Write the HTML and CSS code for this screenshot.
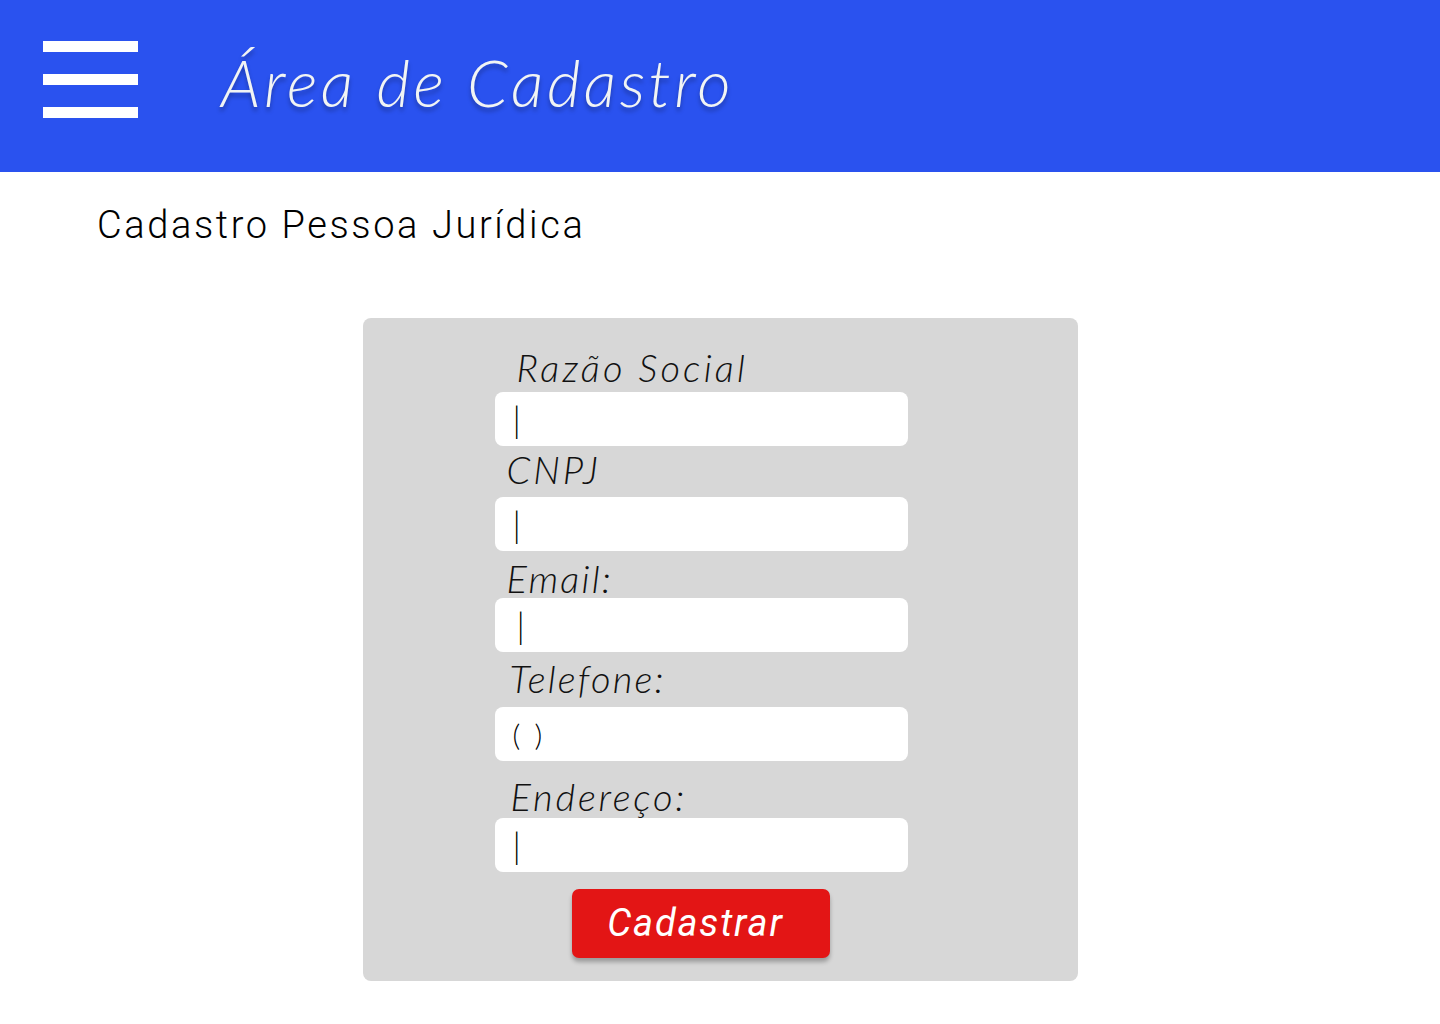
FILE: index.html
```html
<!DOCTYPE html>
<html lang="pt-BR">
<head>
<meta charset="utf-8">
<title>Área de Cadastro</title>
<link rel="stylesheet" href="styles.css">
</head>
<body>
<header class="topbar">
  <button class="menu" aria-label="Menu">
    <span class="menu-bar"></span>
    <span class="menu-bar"></span>
    <span class="menu-bar"></span>
  </button>
  <h1 class="title">Área de Cadastro</h1>
</header>
<main class="page">
  <h2 class="subtitle">Cadastro Pessoa Jurídica</h2>
  <form class="card">
    <label class="label label-razao" for="razao">Razão Social</label>
    <input class="field" id="razao" type="text" value="|">
    <label class="label label-cnpj" for="cnpj">CNPJ</label>
    <input class="field" id="cnpj" type="text" value="|">
    <label class="label label-email" for="email">Email:</label>
    <input class="field field-email" id="email" type="text" value="|">
    <label class="label label-tel" for="tel">Telefone:</label>
    <input class="field field-tel" id="tel" type="text" value="( )">
    <label class="label label-end" for="end">Endereço:</label>
    <input class="field" id="end" type="text" value="|">
    <button class="submit" type="button">Cadastrar</button>
  </form>
</main>
</body>
</html>
```
FILE: styles.css
```css
* { box-sizing: border-box; }

body {
  margin: 0;
  background: #ffffff;
  font-family: Lato, "Open Sans", sans-serif;
  color: #111;
}

.topbar {
  height: 172px;
  background: #2a52ef;
  display: flex;
  align-items: flex-start;
  padding-left: 43px;
}

.menu {
  margin-top: 41px;
  width: 95px;
  padding: 0;
  border: 0;
  background: transparent;
  display: flex;
  flex-direction: column;
  gap: 22px;
}

.menu-bar {
  display: block;
  height: 11px;
  width: 95px;
  background: #ffffff;
}

.title {
  margin: 44px 0 0 83px;
  font-family: Lato, sans-serif;
  font-style: italic;
  font-weight: 300;
  font-size: 65px;
  line-height: 76px;
  color: #f1f4f4;
  text-shadow: 0 4px 4px rgba(0, 0, 0, 0.28);
  letter-spacing: 3.4px;
}

.page {
  padding-top: 31px;
  padding-bottom: 40px;
}

.subtitle {
  margin: 0 0 0 97px;
  font-family: Roboto, sans-serif;
  font-weight: 300;
  font-size: 38px;
  line-height: 44px;
  color: #000;
  letter-spacing: 2.6px;
}

.card {
  width: 715px;
  height: 663px;
  margin: 71px auto 0;
  background: #d7d7d7;
  border-radius: 8px;
  padding: 29px 0 0 132px;
  display: flex;
  flex-direction: column;
  align-items: flex-start;
}

.label {
  display: block;
  font-family: Lato, sans-serif;
  font-style: italic;
  font-weight: 300;
  font-size: 38px;
  line-height: 40px;
  color: #111;
  letter-spacing: 2.2px;
}

.label-razao { padding-left: 22px; margin-bottom: 5px; letter-spacing: 3.2px; }
.label-cnpj  { padding-left: 12px; margin-top: 3px; margin-bottom: 8px; letter-spacing: 2.8px; }
.label-email { padding-left: 12px; margin-top: 7px; margin-bottom: 0; }
.label-tel   { padding-left: 15px; margin-top: 6px; margin-bottom: 9px; }
.label-end   { padding-left: 16px; margin-top: 15px; margin-bottom: 2px; letter-spacing: 2.8px; }

.field {
  display: block;
  width: 413px;
  height: 54px;
  border: 0;
  border-radius: 8px;
  background: #ffffff;
  padding: 0 0 0 18px;
  font-family: Lato, sans-serif;
  font-weight: 300;
  font-size: 35px;
  color: #000;
  outline: none;
}

.field-email { padding-left: 22px; }
.field-tel { font-size: 30px; letter-spacing: 3px; }

.submit {
  margin: 17px 0 0 77px;
  width: 258px;
  height: 69px;
  border: 0;
  border-radius: 7px;
  background: #e31515;
  box-shadow: 0 4px 4px rgba(0, 0, 0, 0.28);
  color: #ffffff;
  font-family: Roboto, sans-serif;
  font-style: italic;
  font-weight: 400;
  font-size: 38px;
  line-height: 69px;
  padding: 0 10px 0 0;
  text-align: center;
  letter-spacing: 1.8px;
}
```
